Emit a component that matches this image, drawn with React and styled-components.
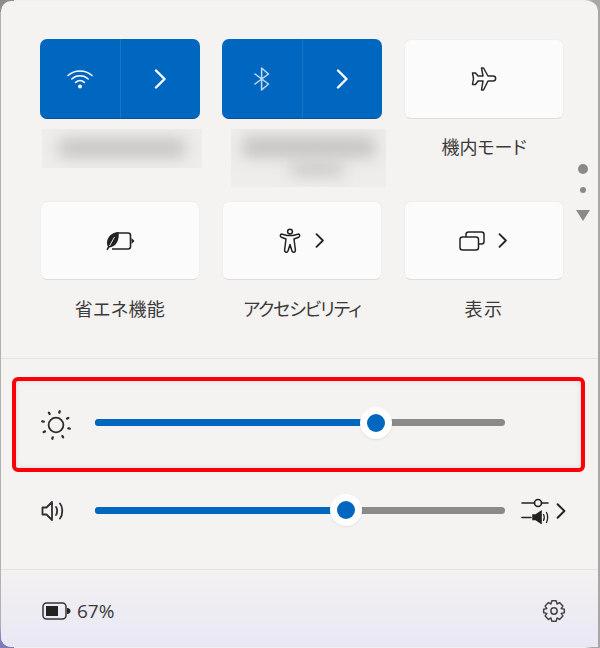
import React from "react";
import styled, { createGlobalStyle } from "styled-components";

const GlobalStyle = createGlobalStyle`
  html, body {
    margin: 0;
    padding: 0;
    width: 600px;
    height: 648px;
    overflow: hidden;
    background: #fff;
  }
`;

const Screen = styled.div`
  width: 600px;
  height: 648px;
  padding: 1px 2px 1px 1px;
  box-sizing: border-box;
  background:
    linear-gradient(180deg, #8f8d8c 0 12px, transparent 12px) left top / 14px 100% no-repeat,
    linear-gradient(180deg, transparent 0 625px, #7d7ab8 640px) left top / 14px 100% no-repeat,
    linear-gradient(90deg, #b3b1b0 0 2px, #f1efed 2px 585px, #a9a7a6 592px);
`;

const Panel = styled.div`
  position: relative;
  height: 646px;
  display: flex;
  flex-direction: column;
  overflow: hidden;
  border-radius: 10px 10px 0 10px;
  background: #f5f3f1;
  color: #333;
  font-family: "Noto Sans CJK JP", "Noto Sans", sans-serif;
`;

const Quick = styled.section`
  height: 358px;
  flex: none;
  box-sizing: border-box;
  padding: 38px 0 0 39px;
  border-bottom: 1px solid #e6e4e2;
  display: grid;
  grid-template-columns: repeat(3, 160px);
  grid-template-rows: 80px 82px 79px 1fr;
  column-gap: 22px;
`;

const SplitTile = styled.div`
  display: grid;
  grid-template-columns: 1fr 1fr;
  border-radius: 7px;
  border-bottom: 1px solid #0b4f92;
  background: #0067c0;
  color: #fff;
  box-sizing: border-box;
`;

const SplitPart = styled.div`
  display: flex;
  align-items: center;
  justify-content: center;
  & + & {
    border-left: 1px solid #1c74c4;
  }
  & + & svg {
    margin-left: -2px;
  }
`;

const Tile = styled.div`
  display: flex;
  align-items: center;
  justify-content: center;
  gap: ${({ $gap }) => $gap || 0}px;
  padding-right: ${({ $pull }) => $pull || 0}px;
  border-radius: 7px;
  background: #fcfbfb;
  border: 1px solid #f0eeec;
  border-bottom: 1px solid #dfdddb;
  box-sizing: border-box;
  color: #222;
`;

const Label = styled.div`
  text-align: center;
  font-size: 18px;
  line-height: 26px;
  padding-top: ${({ $top }) => $top}px;
  letter-spacing: ${({ $spacing }) => $spacing || 0}px;
  font-feature-settings: "palt";
  color: #3a3a3a;
`;

const BlurBox = styled.div`
  height: ${({ $height }) => $height}px;
  margin: 10px ${({ $right }) => $right}px 0 ${({ $left }) => $left}px;
  background: #efedeb;
  overflow: hidden;
  display: flex;
  flex-direction: column;
  align-items: center;
  gap: 6px;
  padding-top: ${({ $pad }) => $pad}px;
  box-sizing: border-box;
`;

const BlurLine = styled.div`
  flex: none;
  width: ${({ $width }) => $width}px;
  height: ${({ $h }) => $h}px;
  margin-left: ${({ $shift }) => $shift || 0}px;
  background: #c4c2c1;
  filter: blur(8px);
`;

const Dots = styled.div`
  position: absolute;
  left: 574px;
  top: 163px;
  width: 16px;
  display: flex;
  flex-direction: column;
  align-items: center;
`;

const Dot = styled.div`
  width: ${({ $size }) => $size}px;
  height: ${({ $size }) => $size}px;
  margin-bottom: ${({ $after }) => $after}px;
  border-radius: 50%;
  background: #8b8a89;
`;

const Arrow = styled.div`
  width: 0;
  height: 0;
  border-left: 7px solid transparent;
  border-right: 7px solid transparent;
  border-top: 11px solid #8b8a89;
`;

const Sliders = styled.section`
  height: 211px;
  flex: none;
  box-sizing: border-box;
  padding: 18px 13px 0 11px;
  border-bottom: 1px solid #e6e4e2;
`;

const Highlight = styled.div`
  height: 95px;
  box-sizing: border-box;
  border: 4px solid #fb0007;
  border-radius: 6px;
  padding: 0 0 4px 25px;
  display: flex;
  align-items: center;
  box-shadow: inset 0 0 5px rgba(0, 0, 0, 0.12);
`;

const VolumeRow = styled.div`
  height: 40px;
  margin-top: 18px;
  padding-left: 29px;
  display: flex;
  align-items: center;
`;

const SliderIcon = styled.div`
  width: 30px;
  margin-right: 24px;
  flex: none;
  display: flex;
  justify-content: flex-start;
  padding-top: ${({ $down }) => $down || 0}px;
  color: #333;
`;

const Track = styled.div`
  position: relative;
  width: 410px;
  height: 7px;
  flex: none;
  border-radius: 4px;
  background: #8a8a8a;
`;

const Fill = styled.div`
  height: 100%;
  border-radius: 4px;
  background: #0067c0;
`;

const Thumb = styled.div`
  position: absolute;
  top: 50%;
  width: 32px;
  height: 32px;
  margin: -16px 0 0 -16px;
  border-radius: 50%;
  background: #fff;
  display: flex;
  align-items: center;
  justify-content: center;
  box-shadow: 0 1px 2px rgba(0, 0, 0, 0.08);
  &::after {
    content: "";
    width: 18px;
    height: 18px;
    border-radius: 50%;
    background: #0067c0;
  }
`;

const MixerButton = styled.div`
  margin-left: 16px;
  padding-top: 2px;
  display: flex;
  align-items: center;
  gap: 7px;
  color: #222;
`;

const Footer = styled.footer`
  flex: 1;
  padding: 4px 32px 0 41px;
  display: flex;
  align-items: center;
  justify-content: space-between;
  background: linear-gradient(180deg, #f3f1f1 0%, #e9e7f4 100%);
`;

const BatteryInfo = styled.div`
  display: flex;
  align-items: center;
  gap: 6px;
  font-family: "Open Sans", sans-serif;
  font-size: 19px;
  color: #3a3a3a;
`;

const Chevron = ({ size = 20 }) => (
  <svg width={size * 0.6} height={size} viewBox="0 0 12 20" fill="none" stroke="currentColor" strokeWidth="2.4" strokeLinecap="round" strokeLinejoin="round">
    <path d="M2 1.5 L10.5 10 L2 18.5" />
  </svg>
);

const WifiIcon = () => (
  <svg width="26" height="20" viewBox="0 0 26 20" fill="none" stroke="#fff" strokeWidth="1.5" strokeLinecap="round">
    <path d="M1 6.5 C7.5 0.5 18.5 0.5 25 6.5" />
    <path d="M4.8 10 C9.5 5.8 16.5 5.8 21.2 10" />
    <path d="M8.6 13.4 C11.2 11.2 14.8 11.2 17.4 13.4" />
    <circle cx="13" cy="17.4" r="2" fill="#fff" stroke="none" />
  </svg>
);

const BluetoothIcon = () => (
  <svg width="18" height="24" viewBox="0 0 18 24" fill="none" stroke="#c4d9f0" strokeWidth="1.5" strokeLinejoin="round" strokeLinecap="round">
    <path d="M2 7 L15.5 17 L8.6 23 V1 L15.5 7 L2 17" />
  </svg>
);

const PlaneIcon = () => (
  <svg width="26" height="26" viewBox="0 0 26 26" fill="none" stroke="#2a2a2a" strokeWidth="1.5" strokeLinejoin="round">
    <path d="M10.5 2 H12.5 L17 10 H22 C25.5 10 25.5 15 22 15 H17 L12.5 24 H10.5 L12 15 H7 L4.5 18.5 H1.5 L2.5 12.5 L1.5 7 H4.5 L7 10 H12 Z" />
  </svg>
);

const BatterySaverIcon = () => (
  <svg width="30" height="20" viewBox="0 0 30 20" fill="none">
    <path d="M13 2 H23 C24.5 2 25.5 3 25.5 4.5 V15.5 C25.5 17 24.5 18 23 18 H7" stroke="#222" strokeWidth="1.6" />
    <path d="M26.5 7 L29.5 10 L26.5 13 Z" fill="#222" />
    <path d="M13.5 1 C7 1 2 6 2 12 C2 13.6 2.4 14.8 3 15.6 L1.4 18.6 L2.6 19.2 L4.4 16.4 C10.5 16.4 15 9 13.5 1 Z" fill="#222" />
    <path d="M9.5 6 L4.5 15" stroke="#fcfbfb" strokeWidth="0.9" />
  </svg>
);

const AccessibilityIcon = () => (
  <svg width="22" height="26" viewBox="0 0 22 26" fill="none" stroke="#222" strokeWidth="1.5" strokeLinejoin="round" strokeLinecap="round">
    <circle cx="11" cy="3.6" r="2.4" />
    <path d="M2.2 6 C1 7 1 8.6 2.4 9.2 L7 11 L5.6 22 C5.3 24.6 8.4 25 9 23 L11 16.5 L13 23 C13.6 25 16.7 24.6 16.4 22 L15 11 L19.6 9.2 C21 8.6 21 7 19.8 6 L14 7.4 H8 Z" />
  </svg>
);

const DisplayIcon = () => (
  <svg width="26" height="20" viewBox="0 0 26 20" fill="none" stroke="#222" strokeWidth="1.5" strokeLinejoin="round">
    <path d="M7 6 V3.5 C7 2 8 1 9.5 1 H22.5 C24 1 25 2 25 3.5 V10.5 C25 12 24 13 22.5 13 H19.5" />
    <rect x="1" y="6" width="18.5" height="13" rx="2.5" />
  </svg>
);

const SunIcon = () => (
  <svg width="30" height="30" viewBox="1 1 30 30" fill="none" stroke="#2e2e2e" strokeLinecap="round">
    <circle cx="16" cy="16" r="7.4" strokeWidth="1.8" />
    {[15, 60, 105, 150, 195, 240, 285, 330].map((deg) => {
      const a = (deg * Math.PI) / 180;
      return (
        <line
          key={deg}
          x1={16 + 12.8 * Math.cos(a)}
          y1={16 + 12.8 * Math.sin(a)}
          x2={16 + 14.2 * Math.cos(a)}
          y2={16 + 14.2 * Math.sin(a)}
          strokeWidth="2.3"
        />
      );
    })}
  </svg>
);

const SpeakerIcon = () => (
  <svg width="24" height="22" viewBox="0 0 24 22" fill="none" stroke="#2e2e2e" strokeWidth="1.8" strokeLinejoin="round" strokeLinecap="round">
    <path d="M1.5 7.5 H5.5 L11 2 V20 L5.5 14.5 H1.5 Z" />
    <path d="M15 7 C16.5 9 16.5 13 15 15" />
    <path d="M19 3.5 C22 7 22 15 19 18.5" />
  </svg>
);

const MixerIcon = () => (
  <svg width="28" height="26" viewBox="0 0 28 26" fill="none" stroke="#222" strokeWidth="1.6" strokeLinecap="round">
    <path d="M1 5 H13.5 M20.5 5 H27" />
    <circle cx="17" cy="5" r="3.5" />
    <path d="M1 19.5 H10" />
    <path d="M12 17 H15 L20 13.5 V25 L15 21.5 H12 Z" fill="#222" />
    <path d="M22.5 16.5 C23.5 18 23.5 21 22.5 22.5 M25.5 14.5 C27 17 27 22 25.5 24.5" strokeWidth="1.3" />
  </svg>
);

const BatteryIcon = () => (
  <svg width="29" height="18" viewBox="0 0 29 18" fill="none">
    <rect x="1" y="1" width="23" height="16" rx="3.5" stroke="#333" strokeWidth="1.5" />
    <rect x="4" y="4" width="12" height="10" fill="#222" />
    <path d="M25 6 C27.5 6 28.5 7.5 28.5 9 C28.5 10.5 27.5 12 25 12 Z" fill="#222" />
  </svg>
);

const GearIcon = () => (
  <svg width="24" height="24" viewBox="0 0 26 26" fill="none" stroke="#444" strokeWidth="1.6" strokeLinejoin="round">
    <path d="M10.6 2 H15.4 L16.3 5.4 L19 3.9 L22.6 7.7 L20.8 10.4 L24.2 11.2 V14.8 L20.8 15.6 L22.6 18.3 L19 22.1 L16.3 20.6 L15.4 24 H10.6 L9.7 20.6 L7 22.1 L3.4 18.3 L5.2 15.6 L1.8 14.8 V11.2 L5.2 10.4 L3.4 7.7 L7 3.9 L9.7 5.4 Z" />
    <circle cx="13" cy="13" r="3.4" />
  </svg>
);

const Slider = ({ value }) => (
  <Track>
    <Fill style={{ width: `${value}%` }} />
    <Thumb style={{ left: `${value}%` }} />
  </Track>
);

export default function App() {
  return (
    <Screen>
      <GlobalStyle />
      <Panel>
        <Quick>
          <SplitTile>
            <SplitPart><WifiIcon /></SplitPart>
            <SplitPart><Chevron /></SplitPart>
          </SplitTile>
          <SplitTile>
            <SplitPart><BluetoothIcon /></SplitPart>
            <SplitPart><Chevron /></SplitPart>
          </SplitTile>
          <Tile><PlaneIcon /></Tile>

          <BlurBox $height={39} $left={2} $right={-2} $pad={10}>
            <BlurLine $width={126} $h={18} />
          </BlurBox>
          <BlurBox $height={58} $left={9} $right={-4} $pad={8}>
            <BlurLine $width={132} $h={20} />
            <BlurLine $width={52} $h={12} $shift={16} />
          </BlurBox>
          <Label $top={14}>機内モード</Label>

          <Tile><BatterySaverIcon /></Tile>
          <Tile $gap={14} $pull={1}>
            <AccessibilityIcon />
            <Chevron size={15} />
          </Tile>
          <Tile $gap={13} $pull={3}>
            <DisplayIcon />
            <Chevron size={15} />
          </Tile>

          <Label $top={15} $spacing={0.4}>省エネ機能</Label>
          <Label $top={15} $spacing={-1.1}>アクセシビリティ</Label>
          <Label $top={15} $spacing={1.5}>表示</Label>
        </Quick>

        <Dots>
          <Dot $size={10} $after={13} />
          <Dot $size={6} $after={17} />
          <Arrow />
        </Dots>

        <Sliders>
          <Highlight>
            <SliderIcon $down={4}><SunIcon /></SliderIcon>
            <Slider value={68.5} />
          </Highlight>
          <VolumeRow>
            <SliderIcon $down={2}><SpeakerIcon /></SliderIcon>
            <Slider value={61.2} />
            <MixerButton>
              <MixerIcon />
              <Chevron size={16} />
            </MixerButton>
          </VolumeRow>
        </Sliders>

        <Footer>
          <BatteryInfo>
            <BatteryIcon />
            67%
          </BatteryInfo>
          <GearIcon />
        </Footer>
      </Panel>
    </Screen>
  );
}
